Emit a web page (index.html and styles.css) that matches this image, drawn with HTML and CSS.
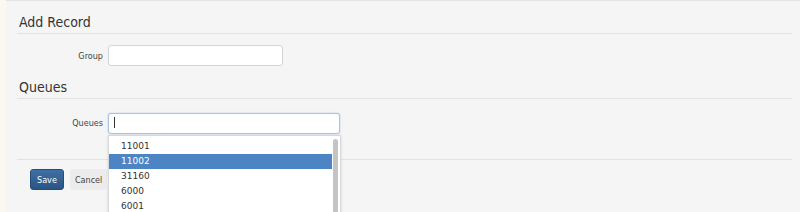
FILE: index.html
```html
<!DOCTYPE html>
<html lang="en">
<head>
    <meta charset="UTF-8">
    <title>Add Record</title>
    <link rel="stylesheet" href="styles.css">
</head>
<body>
    <div class="panel">
        <h2 class="section-title">Add Record</h2>
        <div class="form-row">
            <label for="group">Group</label>
            <input type="text" id="group" class="field field-short">
        </div>

        <h2 class="section-title">Queues</h2>
        <div class="form-row queues-row">
            <label for="queues">Queues</label>
            <div class="combo">
                <input type="text" id="queues" class="field field-long focused">
                <span class="caret"></span>
                <ul class="dropdown">
                    <li>11001</li>
                    <li class="active">11002</li>
                    <li>31160</li>
                    <li>6000</li>
                    <li>6001</li>
                </ul>
            </div>
        </div>

        <div class="actions">
            <button class="btn btn-primary">Save</button>
            <button class="btn btn-link">Cancel</button>
        </div>
    </div>
</body>
</html>
```

FILE: styles.css
```css
body {
    margin: 0;
    background-color: #fcf8f1;
    font-family: "DejaVu Sans Condensed", "DejaVu Sans", Verdana, sans-serif;
    color: #333;
}
.panel {
    margin-left: 6px;
    height: 212px;
    overflow: hidden;
    background-color: #f5f5f5;
    border-top: 1px solid #e4e4e4;
    padding: 0 8px 0 11px;
    box-sizing: border-box;
}
.section-title {
    margin: 0;
    padding: 13px 0 2px 2px;
    font-size: 14px;
    line-height: 17px;
    font-weight: normal;
    color: #333;
    border-bottom: 1px solid #e2e2e2;
}
.form-row {
    display: flex;
    align-items: center;
    gap: 5px;
    padding: 11px 0 0;
}
.form-row label {
    width: 86px;
    text-align: right;
    font-size: 9px;
    color: #444;
}
.field {
    height: 21px;
    box-sizing: border-box;
    border: 1px solid #d4d4d4;
    border-radius: 3px;
    background-color: #fff;
    padding: 0 5px;
    font-size: 10px;
    font-family: inherit;
}
.field-short {
    width: 175px;
}
.field-long {
    width: 232px;
}
.focused {
    border-color: #a9c3e0;
    box-shadow: 0 0 2px rgba(82, 138, 199, 0.4);
    outline: none;
}
.queues-row {
    padding: 13px 0 25px;
    border-bottom: 1px solid #e2e2e2;
}
.combo {
    position: relative;
}
.caret {
    position: absolute;
    left: 6px;
    top: 5px;
    width: 1px;
    height: 11px;
    background-color: #333;
}
.dropdown {
    position: absolute;
    top: 23px;
    left: 0;
    width: 231px;
    height: 80px;
    margin: 0;
    padding: 3px 0 0;
    list-style: none;
    background-color: #fff;
    border: 1px solid #d8d8d8;
    border-bottom: none;
    box-shadow: 0 1px 3px rgba(0, 0, 0, 0.12);
    font-family: "DejaVu Sans", Verdana, sans-serif;
    font-size: 9px;
    color: #333;
}
.dropdown::after {
    content: "";
    position: absolute;
    right: 2px;
    top: 3px;
    width: 5px;
    height: 90px;
    border-radius: 3px;
    background-color: #c4c4c4;
}
.dropdown li {
    height: 15px;
    line-height: 15px;
    padding-left: 12px;
    margin-right: 8px;
}
.dropdown li.active {
    background-color: #4d84c4;
    color: #fff;
}
.actions {
    display: flex;
    gap: 6px;
    padding: 9px 0 0 13px;
}
.btn {
    height: 21px;
    padding: 0 6px;
    font-size: 9px;
    font-family: inherit;
    border-radius: 3px;
    cursor: pointer;
}
.btn-primary {
    background: linear-gradient(#3f6fa5, #285584);
    border: 1px solid #244d78;
    color: #fff;
}
.btn-link {
    background-color: #ececec;
    border: 1px solid #ececec;
    color: #444;
    padding: 0 4px;
}
```
